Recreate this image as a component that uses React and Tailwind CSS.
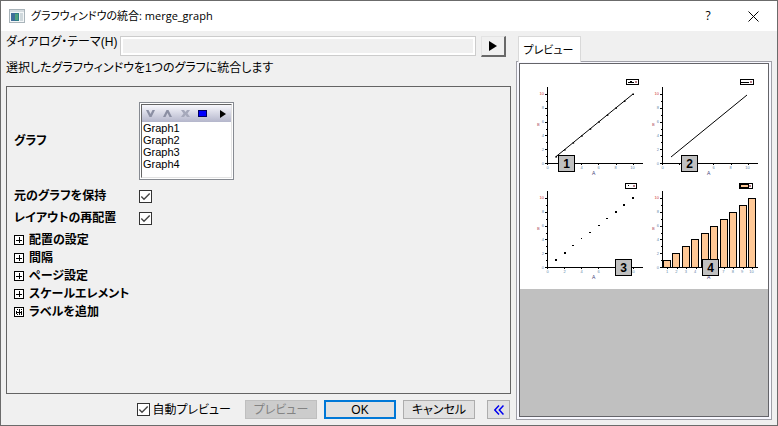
const sections = ["配置の設定", "間隔", "ページ設定", "スケールエレメント", "ラベルを追加"];
const graphs = ["Graph1", "Graph2", "Graph3", "Graph4"];
const steps = [1, 2, 3, 4, 5, 6, 7, 8, 9, 10];

const Check = ({ id }) => (
  <span className="grid size-[13px] shrink-0">
    <input
      id={id}
      type="checkbox"
      defaultChecked
      className="peer col-start-1 row-start-1 size-[13px] appearance-none border border-[#333] bg-white"
    />
    <svg viewBox="0 0 13 13" className="pointer-events-none invisible col-start-1 row-start-1 size-[13px] peer-checked:visible">
      <path d="M2.3 6.5 5 9.2 10.7 3.5" fill="none" stroke="#444" strokeWidth="1.4" />
    </svg>
  </span>
);

const Plus = ({ dotted }) => (
  <svg viewBox="0 0 10 10" className="size-[10px] shrink-0" shapeRendering="crispEdges">
    <rect x=".5" y=".5" width="9" height="9" fill="#fff" stroke="#000" />
    {dotted && <rect x="2.5" y="2.5" width="5" height="5" fill="none" stroke="#000" strokeDasharray="1 1" />}
    <path d="M2 5.5H8M5.5 2V8" stroke="#000" />
  </svg>
);

// covered: x labels that sit under the number badge
const Axes = ({ x, y, bars, covered = [] }) => (
  <g>
    <g shapeRendering="crispEdges" stroke="#000" fill="none">
      <path d={`M${x + 0.5} ${y}V${y + 76.5}H${x + 96}`} />
      {[7, 21, 35, 48, 62, 76].map((t) => (
        <path key={t} d={`M${x - 2} ${y + t + 0.5}h2`} />
      ))}
      {[14, 28, 42, 55, 69].map((t) => (
        <path key={t} d={`M${x - 1} ${y + t + 0.5}h1`} />
      ))}
      {(bars ? steps.map((n) => n * 9.4 - 4) : [0, 17, 34, 51, 69, 86]).map((t) => (
        <path key={t} d={`M${x + Math.round(t) + 0.5} ${y + 77}v1`} />
      ))}
    </g>
    <g fontSize="4" textAnchor="end">
      {[10, 8, 6, 4, 2, 0].map((n, i) => (
        <text key={n} x={x - 3} y={y + 8 + i * 14} fill={n === 10 ? "#c33" : "#68a"}>
          {n}
        </text>
      ))}
    </g>
    <g fontSize="4" textAnchor="middle" fill="#68a">
      {(bars ? steps : [0, 2, 4, 6, 8, 10]).map(
        (n, i) =>
          !covered.includes(n) && (
            <text key={n} x={bars ? x + i * 9.4 + 5 : x + 0.5 + i * 17} y={y + 82}>
              {n}
            </text>
          )
      )}
    </g>
    <text x={x - 10} y={y + 39} fontSize="4" fill="#a45">B</text>
    <text x={x + 45} y={y + 88} fontSize="5" fill="#447">A</text>
  </g>
);

const Badge = ({ x, y, n }) => (
  <g>
    <rect x={x + 0.5} y={y + 0.5} width="16" height="16" fill="#c0c0c0" stroke="#000" />
    <text x={x + 8.5} y={y + 13} fontSize="12" fontWeight="700" textAnchor="middle">
      {n}
    </text>
  </g>
);

const Legend = ({ x, y, w, children }) => (
  <g shapeRendering="crispEdges">
    <rect x={x + 0.5} y={y + 0.5} width={w} height="5" fill="#fff" stroke="#000" />
    {children}
    <rect x={x + w - 3} y={y + 2} width="2" height="2" fill="#b67c86" />
  </g>
);

const Charts = () => (
  <svg viewBox="520 64 248 225" className="block w-full bg-white" fontFamily="'Liberation Sans', sans-serif">
    <Axes x={547} y={87} covered={[2]} />
    <path d="M555.500 157 633 94" stroke="#000" />
    {steps.map((n) => (
      <rect key={n} x={547 + n * 8.55} y={163 - n * 6.95} width="1.5" height="1.5" />
    ))}
    <Legend x={626} y={79} w={12}>
      <path d="M628 82.500h6M630 81.500h2" stroke="#000" />
    </Legend>

    <Axes x={662} y={87} covered={[2]} />
    <path d="M671 157 747 95" stroke="#000" />
    <Legend x={740} y={79} w={13}>
      <path d="M741 82.500h8" stroke="#000" />
    </Legend>

    <Axes x={547} y={191} covered={[8]} />
    {steps.map((n) => (
      <rect
        key={n}
        x={Math.round(546.5 + n * 8.55)}
        y={Math.round(266 - n * 6.9)}
        width={n === 4 ? 1 : 2}
        height={[1, 2, 8, 9, 10].includes(n) ? 2 : 1}
        shapeRendering="crispEdges"
      />
    ))}
    <Legend x={625} y={183} w={11}>
      <rect x="628" y="185" width="1" height="1" />
    </Legend>

    <g shapeRendering="crispEdges" fill="#ffc896" stroke="#000">
      {steps.map((n) => {
        const left = Math.round(653.5 + n * 9.45);
        const top = Math.round(267 - n * 6.9);
        return <rect key={n} x={left + 0.5} y={top + 0.5} width="7" height={267 - top} />;
      })}
    </g>
    <Axes x={662} y={191} bars covered={[5, 6]} />
    <Legend x={739} y={183} w={13}>
      <rect x="740.5" y="184.500" width="8" height="3" fill="#ffc896" stroke="#000" />
    </Legend>

    <Badge x={558} y={155} n="1" />
    <Badge x={681} y={155} n="2" />
    <Badge x={615} y={259} n="3" />
    <Badge x={702} y={259} n="4" />
  </svg>
);

const TitleBar = () => (
  <header className="flex h-[30px] items-center bg-white pr-[18px] pl-2 font-['Open_Sans','Noto_Sans_CJK_JP',sans-serif]">
    <svg viewBox="0 0 16 14" className="h-[14px] w-4">
      <rect x=".5" y=".5" width="15" height="13" fill="#f4f7f8" stroke="#a9b4ba" />
      <rect x="1" y="1" width="14" height="2" fill="#d5dce0" />
      <rect x="2" y="4" width="8" height="8" fill="#2f7f86" />
      <rect x="2" y="4" width="4" height="8" fill="#3f6f9a" />
      <rect x="6" y="5" width="3" height="6" fill="#4fa27c" />
      <rect x="11" y="4" width="3" height="8" fill="#cfd8dc" />
    </svg>
    <h1 className="ml-[6px] flex-1 text-[11px] leading-4">グラフウィンドウの統合: merge_graph</h1>
    <button aria-label="ヘルプ" className="w-4 text-[12px] leading-4">?</button>
    <button aria-label="閉じる" className="ml-8">
      <svg viewBox="0 0 11 11" className="size-[11px]">
        <path d="M.5.5l10 10M10.500.5l-10 10" stroke="#000" />
      </svg>
    </button>
  </header>
);

const GraphList = () => (
  <div className="w-[95px] border border-[#868a91] bg-white p-px">
    <div className="h-[74px] border border-[#646464] border-r-[#e3e3e3] border-b-[#e3e3e3]">
      <div className="flex h-[17px] items-center justify-between bg-linear-to-b from-[#f8f8fd] to-[#b4b6cb] pr-[5px] pl-1">
        <button aria-label="下へ">
          <svg viewBox="0 0 9 7" className="h-[7px] w-[9px]"><path d="M0 0h2.500l2 4 2-4H9L5.500 7h-2z" fill="#8b8fa3" /></svg>
        </button>
        <button aria-label="上へ">
          <svg viewBox="0 0 9 7" className="h-[7px] w-[9px]"><path d="M0 7h2.500l2-4 2 4H9L5.500 0h-2z" fill="#8b8fa3" /></svg>
        </button>
        <button aria-label="削除">
          <svg viewBox="0 0 9 7" className="h-[7px] w-[9px]"><path d="M0 0h3l1.500 2L6 0h3L6.500 3.500 9 7H6L4.500 5 3 7H0l2.500-3.500z" fill="#a6a9bb" /></svg>
        </button>
        <button aria-label="選択" className="h-[7px] w-[9px] border border-[#000060] bg-[#0000ff]"></button>
        <button aria-label="追加" className="ml-1">
          <svg viewBox="0 0 7 8" className="h-2 w-[7px]"><path d="M1 0 7 4 1 8z" /></svg>
        </button>
      </div>
      <ul className="px-px text-[11px] leading-3">
        {graphs.map((g) => (
          <li key={g}>{g}</li>
        ))}
      </ul>
    </div>
  </div>
);

const Settings = () => (
  <section className="flex-1 border border-[#646464] px-[7px] pt-[15px] font-bold">
    <div className="flex items-center">
      <div className="w-[125px]">グラフ</div>
      <div className="font-normal"><GraphList /></div>
    </div>
    <div className="mt-[5px] flex h-[22px] items-center">
      <label htmlFor="keep" className="w-[125px]">元のグラフを保持</label>
      <Check id="keep" />
    </div>
    <div className="flex h-[22px] items-center">
      <label htmlFor="arrange" className="w-[125px]">レイアウトの再配置</label>
      <Check id="arrange" />
    </div>
    <div className="mt-[2px]">
      {sections.map((s, i) => (
        <button key={s} className="flex h-[18px] items-center gap-[5px]">
          <Plus dotted={i === 4} />
          {s}
        </button>
      ))}
    </div>
  </section>
);

const Footer = () => (
  <div className="mt-[6px] flex h-[19px] items-center">
    <div className="ml-auto flex items-center gap-[2px]">
      <Check id="auto" />
      <label htmlFor="auto">自動プレビュー</label>
    </div>
    <button disabled className="ml-[14px] h-[19px] w-[72px] border border-[#bfbfbf] bg-[#cccccc] leading-4 text-[#838383]">プレビュー</button>
    <button className="ml-[7px] h-[19px] w-[72px] border-2 border-[#0078d7] bg-[#e1e1e1] leading-[14px]">OK</button>
    <button className="ml-[7px] h-[19px] w-[72px] border border-[#adadad] bg-[#e1e1e1] leading-4">キャンセル</button>
    <button aria-label="折りたたむ" className="mr-px ml-3 grid h-[19px] w-[23px] place-items-center border border-[#adadad] bg-[#e1e1e1]">
      <svg viewBox="0 0 10 10" className="size-[10px]">
        <path d="M5 .5.8 5 5 9.500M9.500.5 5.300 5l4.200 4.500" fill="none" stroke="#0000f0" strokeWidth="1.500" />
      </svg>
    </button>
  </div>
);

const Preview = () => (
  <aside className="mt-[5px] mb-[5px] flex w-[256px] shrink-0 flex-col">
    <div className="relative z-10 -mb-px ml-[2px] flex">
      <button className="h-[26px] w-[63px] border border-b-0 border-[#d9d9d9] bg-white pr-[2px] text-[11px] font-['Open_Sans','Noto_Sans_CJK_JP',sans-serif]">プレビュー</button>
    </div>
    <div className="flex flex-1 flex-col border border-[#a0a0a8] bg-[#f8f8ff] px-[2px] pt-px pb-[2px]">
      <div className="flex-1 border border-[#646469] bg-[#c0c0c0]">
        <Charts />
      </div>
    </div>
  </aside>
);

const App = () => {
  return (
    <div className="flex min-h-screen flex-col border border-[#6b6b6b] bg-[#f0f0f0] font-['Liberation_Sans','Noto_Sans_CJK_JP',sans-serif] text-[12px] leading-4 text-black [font-feature-settings:'palt']">
      <TitleBar />
      <div className="flex flex-1 gap-[5px] pr-[5px] pl-[5px]">
        <main className="flex min-w-0 flex-1 flex-col pt-[5px] pb-[6px]">
          <div className="flex h-[21px]">
            <label htmlFor="theme" className="w-[114px] leading-3">ダイアログ・テーマ(H)</label>
            <input id="theme" readOnly className="h-5 min-w-0 flex-1 border border-[#cccccc] bg-[#f0f0f0] outline-2 -outline-offset-3 outline-white" />
            <button aria-label="テーマメニュー" className="mr-[5px] ml-[5px] grid h-[21px] w-[25px] place-items-center border-t border-r-2 border-b-2 border-l border-t-[#e3e3e3] border-r-[#696969] border-b-[#696969] border-l-[#e3e3e3]">
              <svg viewBox="0 0 8 10" className="h-[10px] w-2"><path d="M0 0 8 5 0 10z" /></svg>
            </button>
          </div>
          <p className="mt-[3px] mb-[10px]">選択したグラフウィンドウを1つのグラフに統合します</p>
          <Settings />
          <Footer />
        </main>
        <Preview />
      </div>
    </div>
  );
};

export default App;
